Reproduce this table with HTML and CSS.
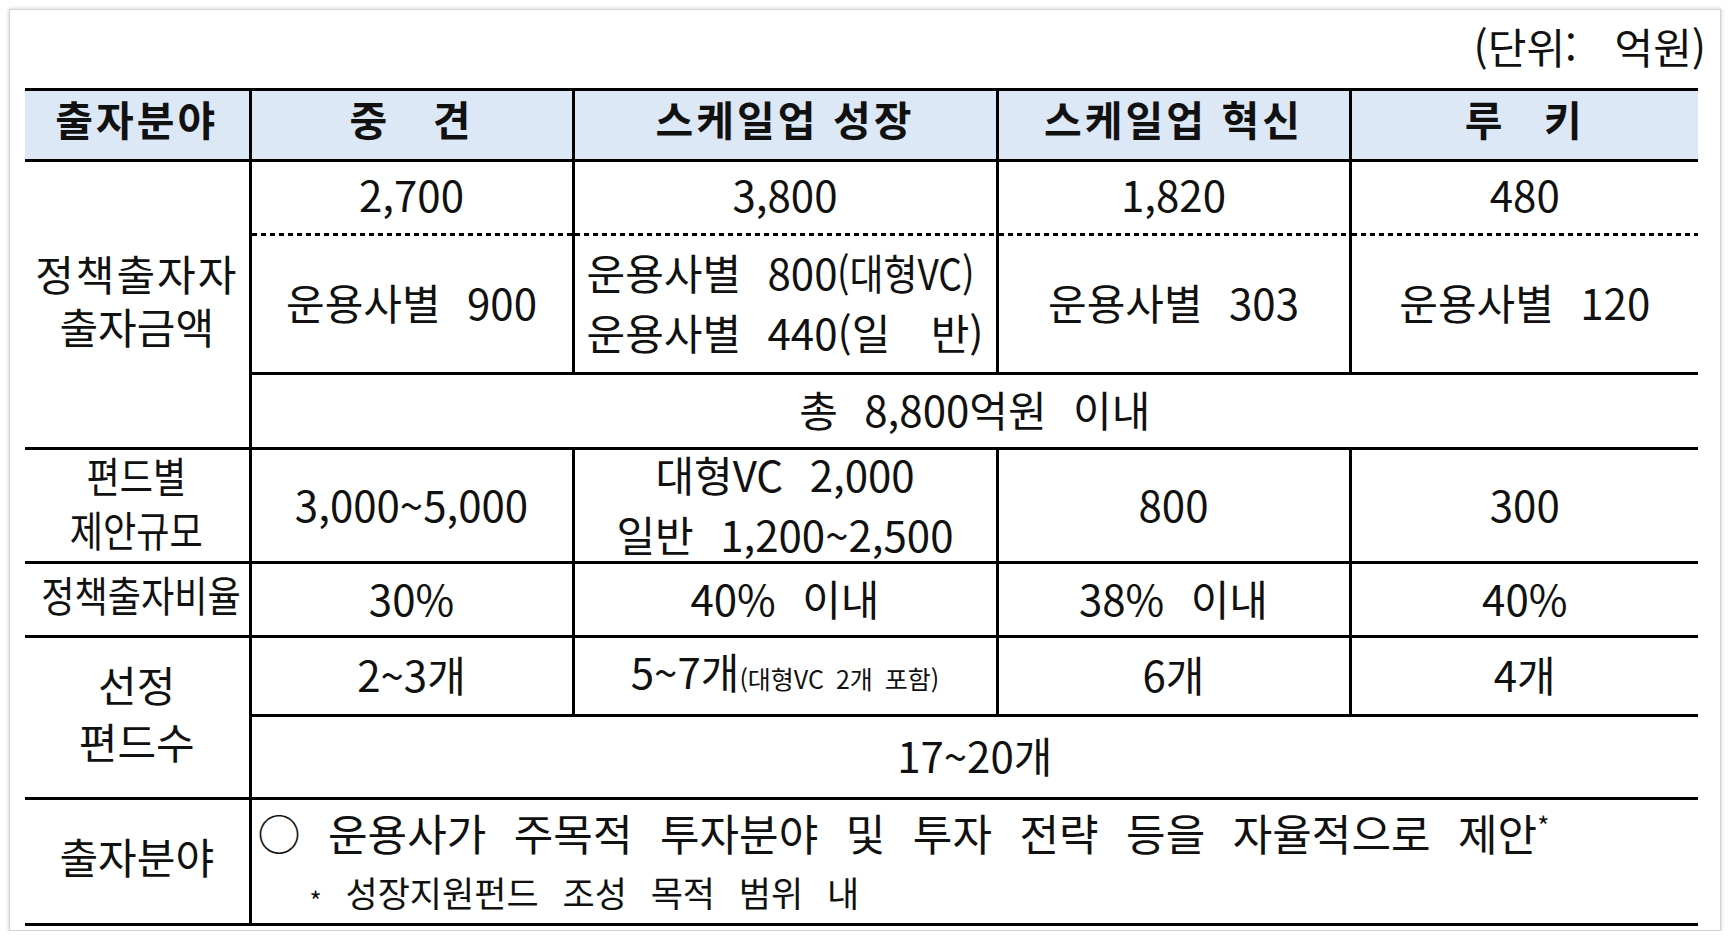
FILE: index.html
```html
<!DOCTYPE html>
<html lang="ko">
<head>
<meta charset="utf-8">
<title>출자분야별 정책출자 규모</title>
<link rel="stylesheet" href="styles.css">
</head>
<body>
<div class="card">
  <div class="unit">(단위: 억원)</div>
  <table class="grid">
    <colgroup>
      <col class="c1"><col class="c2"><col class="c3"><col class="c4"><col class="c5">
    </colgroup>
    <thead>
      <tr class="r-head">
        <th>출자분야</th>
        <th><span class="sp-a">중 견</span></th>
        <th>스케일업 성장</th>
        <th>스케일업 혁신</th>
        <th><span class="sp-b">루 키</span></th>
      </tr>
    </thead>
    <tbody>
      <tr class="r-sub1">
        <th rowspan="3" class="label lh53"><span class="wide">정책출자자</span><br>출자금액</th>
        <td class="dot">2,700</td>
        <td class="dot">3,800</td>
        <td class="dot">1,820</td>
        <td class="dot">480</td>
      </tr>
      <tr class="r-sub2">
        <td class="under">운용사별 900</td>
        <td class="under"><div class="stack">운용사별 800<span class="cond"><span>(대형VC)</span></span><br>운용사별 440<span class="just"><span>(일</span><span>반)</span></span></div></td>
        <td class="under">운용사별 303</td>
        <td class="under">운용사별 120</td>
      </tr>
      <tr class="r-total">
        <td colspan="4">총 8,800억원 이내</td>
      </tr>
      <tr class="r-fund">
        <th class="label lh54"><span class="sq">편드별<br>제안규모</span></th>
        <td>3,000~5,000</td>
        <td><div class="stack">대형VC 2,000<br>일반 1,200~2,500</div></td>
        <td>800</td>
        <td>300</td>
      </tr>
      <tr class="r-ratio">
        <th class="label"><span class="sq">정책출자비율</span></th>
        <td>30%</td>
        <td>40% 이내</td>
        <td>38% 이내</td>
        <td>40%</td>
      </tr>
      <tr class="r-sel1">
        <th rowspan="2" class="label lh57">선정<br>편드수</th>
        <td>2~3개</td>
        <td>5~7개<span class="small">(대형VC 2개 포함)</span></td>
        <td>6개</td>
        <td>4개</td>
      </tr>
      <tr class="r-sel2">
        <td colspan="4">17~20개</td>
      </tr>
      <tr class="r-field">
        <th class="label">출자분야</th>
        <td colspan="4" class="field">
          <div class="f1">○ 운용사가 주목적 투자분야 및 투자 전략 등을 자율적으로 제안<span class="sup">*</span></div>
          <div class="f2"><span class="ast">*</span> 성장지원펀드 조성 목적 범위 내</div>
        </td>
      </tr>
    </tbody>
  </table>
</div>
</body>
</html>
```

FILE: styles.css
```css
html, body {
  margin: 0;
  padding: 0;
  background: #ffffff;
}

body {
  font-family: "Noto Sans CJK KR", "Noto Sans", sans-serif;
  color: #111111;
}

.card {
  box-sizing: border-box;
  margin: 9px 0 0 9px;
  width: 1712px;
  height: 922px;
  border: 1px solid #d2d2d2;
  box-shadow: 0 0 4px rgba(0, 0, 0, 0.22);
  background: #ffffff;
  padding: 12px 22px 0 15px;
}

.unit {
  text-align: right;
  font-size: 42px;
  line-height: 48px;
  margin-right: -8px;
  word-spacing: 26px;
}

.grid {
  border-collapse: collapse;
  table-layout: fixed;
  width: 1673px;
  margin-top: 18px;
  border-left: hidden;
  border-right: hidden;
}

.c1 { width: 225px; }
.c2 { width: 323px; }
.c3 { width: 424px; }
.c4 { width: 353px; }
.c5 { width: 348px; }

.grid th,
.grid td {
  border: 3px solid #000000;
  padding: 0 0 4px 0;
  text-align: center;
  vertical-align: middle;
  font-size: 42px;
  line-height: 48px;
  font-weight: 400;
  word-spacing: 0.35em;
  white-space: nowrap;
}

.grid th.label {
  font-family: "Liberation Sans", "Noto Sans CJK KR", sans-serif;
}

.r-head th {
  background: #dce8f6;
  font-size: 41px;
  font-weight: 700;
  letter-spacing: 3px;
  word-spacing: 0;
  padding-bottom: 14px;
}

.sp-a { word-spacing: 28px; }
.sp-b { word-spacing: 24px; }

.r-head { height: 71px; }
.r-sub1 { height: 75px; }
.r-sub2 { height: 138px; }
.r-total { height: 75px; }
.r-fund { height: 114px; }
.r-ratio { height: 74px; }
.r-sel1 { height: 79px; }
.r-sel2 { height: 83px; }
.r-field { height: 126px; }

.grid td.dot {
  border-bottom: none;
  padding-bottom: 10px;
  background-image: repeating-linear-gradient(90deg, #000 0 5px, transparent 5px 9px);
  background-size: 100% 3px;
  background-position: left bottom;
  background-repeat: no-repeat;
}

.grid td.under {
  border-top: none;
}

.stack {
  line-height: 60px;
  margin: -7px 0;
}

.wide { letter-spacing: 2px; }

.grid th.lh53 { line-height: 53px; }

.grid th.lh54 {
  line-height: 54px;
  padding-bottom: 0;
}

.grid th.lh57 { line-height: 57px; }

.sq {
  display: inline-block;
  transform: scaleX(0.86);
}

.cond {
  display: inline-block;
  width: 146px;
  text-align: left;
}

.cond > span {
  display: inline-block;
  transform-origin: 0 50%;
  transform: scaleX(0.88);
}

.just {
  display: inline-flex;
  justify-content: space-between;
  width: 146px;
}

.small {
  font-size: 25px;
  word-spacing: 0.2em;
}

.grid td.field {
  text-align: left;
  padding: 0 0 0 6px;
}

.f1 {
  font-size: 43px;
  line-height: 60px;
  word-spacing: 0.36em;
}

.f2 {
  font-size: 35px;
  line-height: 60px;
  padding-left: 52px;
  word-spacing: 0.4em;
}

.sup {
  font-size: 26px;
  line-height: 0;
  vertical-align: 15px;
}

.ast {
  font-size: 26px;
  line-height: 0;
  vertical-align: -4px;
}
```
